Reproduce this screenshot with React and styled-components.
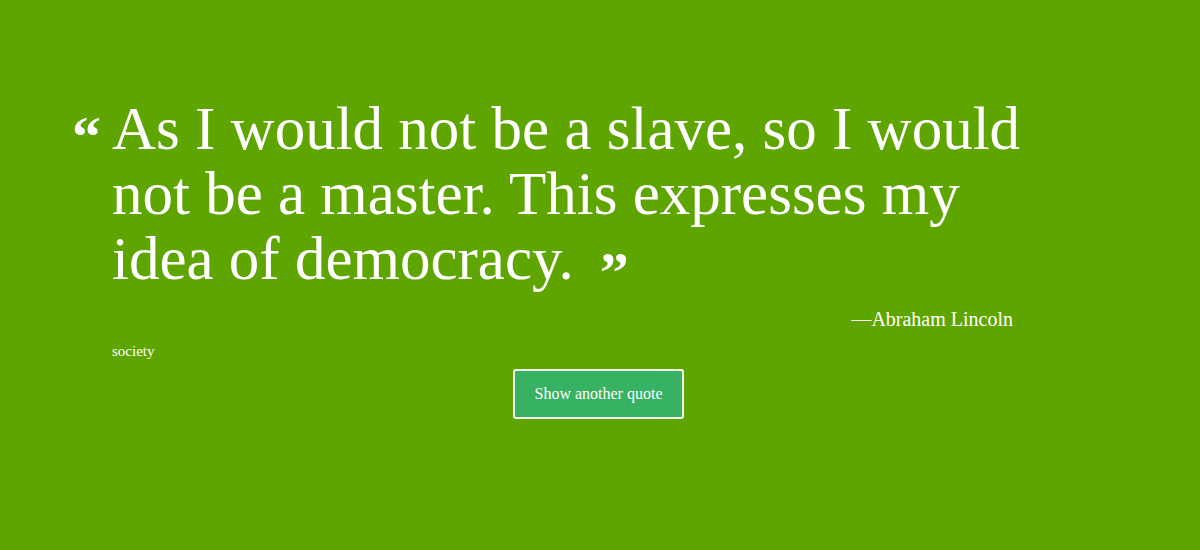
import React from 'react';
import styled, { createGlobalStyle } from 'styled-components';

const GlobalStyle = createGlobalStyle`
  html, body {
    margin: 0;
    padding: 0;
    background-color: #5fa500;
  }
  body {
    font-family: 'Liberation Serif', 'DejaVu Serif', serif;
    color: #ffffff;
  }
`;

const Page = styled.main`
  min-height: 550px;
  padding: 96px 72px 0;
  box-sizing: border-box;
`;

const QuoteBox = styled.blockquote`
  margin: 0;
  display: flex;
  align-items: flex-start;
  width: 960px;
`;

const OpenMark = styled.span`
  width: 40px;
  flex: none;
  padding-top: 8px;
  font-size: 58px;
  font-weight: bold;
  line-height: 65px;
`;

const Text = styled.p`
  margin: 0;
  font-size: 61px;
  line-height: 65px;
  width: 920px;
`;

const CloseMark = styled.span`
  font-size: 58px;
  font-weight: bold;
  line-height: 0;
  margin-left: 26px;
  vertical-align: -0.22em;
`;

const Author = styled.p`
  margin: 17px 0 0;
  width: 941px;
  text-align: right;
  font-size: 20px;
`;

const Tags = styled.div`
  margin: 12px 0 0 40px;
  font-size: 15px;
`;

const Actions = styled.div`
  display: flex;
  justify-content: center;
  margin-top: 9px;
  padding-right: 3px;
`;

const Button = styled.button`
  width: 171px;
  height: 50px;
  border: 2px solid #f4fbe8;
  border-radius: 3px;
  background-color: #36b262;
  color: #ffffff;
  font-family: inherit;
  font-size: 16px;
  cursor: pointer;
`;

export default function App() {
  return (
    <>
      <GlobalStyle />
      <Page>
        <QuoteBox>
          <OpenMark>“</OpenMark>
          <Text>
            As I would not be a slave, so I would not be a master. This expresses
            my idea of democracy.<CloseMark>”</CloseMark>
          </Text>
        </QuoteBox>
        <Author>—Abraham Lincoln</Author>
        <Tags>society</Tags>
        <Actions>
          <Button type="button">Show another quote</Button>
        </Actions>
      </Page>
    </>
  );
}
